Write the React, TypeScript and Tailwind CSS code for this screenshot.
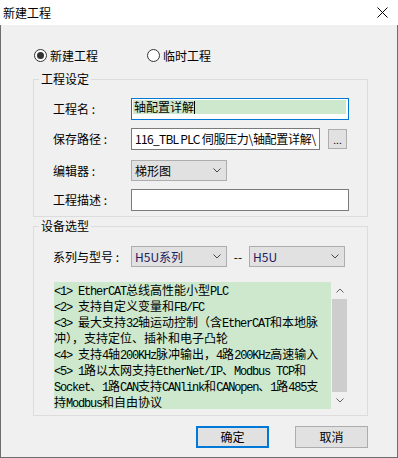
import React from "react";

const ui = "font-['Noto_Sans_CJK_SC','Noto_Sans',sans-serif]";

function Chevron({ up = false, className = "" }: { up?: boolean; className?: string }) {
  return (
    <svg width="8" height="5" viewBox="0 0 8 5" className={className}>
      <polyline
        points={up ? "0.5,4.5 4,1 7.5,4.5" : "0.5,0.5 4,4 7.5,0.5"}
        fill="none"
        stroke="currentColor"
        strokeWidth="1"
      />
    </svg>
  );
}

// latin runs in a half-width mono, the rest in CJK
function Mixed({ text }: { text: string }) {
  const parts = text.match(/[\x20-\x7e]+|[^\x20-\x7e]+/g) || [];
  return (
    <>
      {parts.map((p, i) =>
        /^[\x20-\x7e]/.test(p) ? (
          <span key={i} className="font-['Liberation_Mono',monospace] text-[12px] tracking-[-1.2px] leading-[16px]">
            {p}
          </span>
        ) : (
          <span key={i} className="leading-[16px]">{p}</span>
        )
      )}
    </>
  );
}

function Radio({ checked, label }: { checked?: boolean; label: string }) {
  return (
    <div className="flex items-center gap-[3px] h-[13px]">
      <div className="w-[13px] h-[13px] rounded-full border border-[#333] bg-white flex items-center justify-center">
        {checked && <div className="w-[7px] h-[7px] rounded-full bg-[#333]" />}
      </div>
      <span className="leading-[13px]">{label}</span>
    </div>
  );
}

function Select({ value, width = "w-[96px]", color = "text-black" }: { value: string; width?: string; color?: string }) {
  return (
    <div className={`${width} h-[21px] border border-[#adadad] bg-[#e1e1e1] flex items-center justify-between pl-[3px] pr-[5px]`}>
      <span className={`leading-[14px] ${color}`}>{value}</span>
      <Chevron className="text-[#444]" />
    </div>
  );
}

const lines = [
  "<1> EtherCAT总线高性能小型PLC",
  "<2> 支持自定义变量和FB/FC",
  "<3> 最大支持32轴运动控制（含EtherCAT和本地脉",
  "冲），支持定位、插补和电子凸轮",
  "<4> 支持4轴200KHz脉冲输出，4路200KHz高速输入",
  "<5> 1路以太网支持EtherNet/IP、Modbus TCP和",
  "Socket、1路CAN支持CANlink和CANopen、1路485支",
  "持Modbus和自由协议",
];

export default function App() {
  return (
    <div className={`w-[398px] h-[458px] bg-[#f0f0f0] text-black text-[12px] ${ui} flex flex-col`}>
      {/* title bar */}
      <div className="h-[25px] bg-white flex items-center justify-between pl-[3px] pr-[10px]">
        <span className="leading-[14px]">新建工程</span>
        <svg width="11" height="11" viewBox="0 0 11 11">
          <path d="M0.5 0.5 L10.5 10.5 M10.5 0.5 L0.5 10.5" stroke="#000" strokeWidth="1" />
        </svg>
      </div>

      <div className="flex-1 border-x border-b border-[#6d6d6d] pt-[24px]">
        <div className="flex ml-[33px]">
          <Radio checked label="新建工程" />
          <div className="ml-[49px]">
            <Radio label="临时工程" />
          </div>
        </div>

        {/* 工程设定 */}
        <fieldset className="ml-[32px] mt-[10px] w-[335px] border border-[#dcdcdc]">
          <legend className="ml-[5px] px-[2px] leading-[14px]">工程设定</legend>
          <div className="pl-[19px] pt-[12px] pb-[5px]">
            <div className="flex items-center">
              <span className="w-[78px]">工程名 :</span>
              <div className="w-[218px] h-[22px] border border-[#0078d7] bg-white p-[1px]">
                <div className="h-[14px] w-[213px] bg-[#cde8cc] flex items-center pl-[1px]">
                  <span className="leading-[14px]">轴配置详解</span>
                  <div className="w-[1px] h-[13px] bg-black" />
                </div>
              </div>
            </div>
            <div className="flex items-center mt-[8px]">
              <span className="w-[78px]">保存路径 :</span>
              <div className="w-[189px] h-[22px] border border-[#7a7a7a] bg-white flex items-center pl-[3px] overflow-hidden whitespace-pre">
                <span className="leading-[14px] tracking-[-0.7px]">116_TBL PLC </span>
                <span className="leading-[14px] tracking-[-0.3px]">伺服压力\轴配置详解\</span>
              </div>
              <div className="ml-[8px] w-[19px] h-[20px] border border-[#adadad] bg-[#e1e1e1] flex items-end justify-center pb-[3px]">
                <span className="text-[10px] leading-[10px]">...</span>
              </div>
            </div>
            <div className="flex items-center mt-[10px]">
              <span className="w-[78px]">编辑器 :</span>
              <Select value="梯形图" />
            </div>
            <div className="flex items-center mt-[8px]">
              <span className="w-[78px]">工程描述 :</span>
              <div className="w-[218px] h-[22px] border border-[#7a7a7a] bg-white" />
            </div>
          </div>
        </fieldset>

        {/* 设备选型 */}
        <fieldset className="ml-[32px] mt-[2px] w-[335px] border border-[#dcdcdc]">
          <legend className="ml-[5px] px-[2px] leading-[14px]">设备选型</legend>
          <div className="pl-[19px] pt-[13px] pb-[6px]">
            <div className="flex items-center">
              <span className="w-[78px]">系列与型号 :</span>
              <Select value="H5U系列" color="text-[#1c2060]" />
              <span className="w-[22px] text-center leading-[14px]">--</span>
              <Select value="H5U" color="text-[#1c2060]" />
            </div>
            <div className="flex ml-[1px] mt-[15px] h-[127px]">
              <div className="w-[277px] bg-[#cde8cc] overflow-hidden whitespace-pre">
                {lines.map((l, i) => (
                  <div key={i} className="h-[16px] leading-[16px]">
                    <Mixed text={l} />
                  </div>
                ))}
              </div>
              <div className="w-[17px] flex flex-col bg-[#f0f0f0] text-[#606060]">
                <div className="h-[17px] flex items-center justify-center">
                  <Chevron up />
                </div>
                <div className="flex-1 mx-[1px] bg-[#cdcdcd]" />
                <div className="h-[17px] flex items-center justify-center">
                  <Chevron />
                </div>
              </div>
            </div>
          </div>
        </fieldset>

        <div className="flex ml-[195px] mt-[10px] gap-[26px]">
          <div className="w-[73px] h-[22px] border-2 border-[#0078d7] bg-[#e1e1e1] flex items-center justify-center">
            <span className="leading-[14px]">确定</span>
          </div>
          <div className="w-[73px] h-[22px] border border-[#adadad] bg-[#e1e1e1] flex items-center justify-center">
            <span className="leading-[14px]">取消</span>
          </div>
        </div>
      </div>
    </div>
  );
}
